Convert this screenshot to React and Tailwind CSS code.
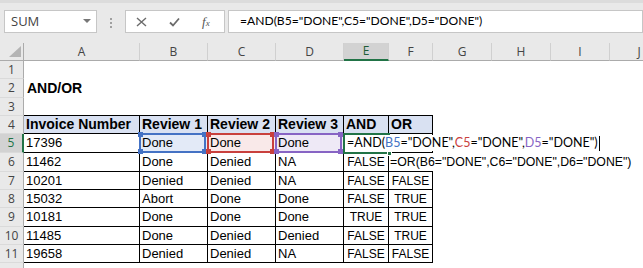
import React from "react";

const COLS = [
  { k: "A", w: "w-[116px]" },
  { k: "B", w: "w-[68px]" },
  { k: "C", w: "w-[68px]" },
  { k: "D", w: "w-[68px]" },
  { k: "E", w: "w-[45px]" },
  { k: "F", w: "w-[44px]" },
  { k: "G", w: "w-[59px]" },
  { k: "H", w: "w-[59px]" },
  { k: "I", w: "w-[59px]" },
  { k: "J", w: "w-[59px]" },
];

const HEIGHTS = [
  "h-[18px]", "h-[19px]", "h-[18px]", "h-[18px]", "h-[19px]", "h-[19px]",
  "h-[18px]", "h-[18px]", "h-[19px]", "h-[18px]", "h-[18px]", "h-[18px]",
];

const DATA = [
  ["11462", "Done", "Denied", "NA", "FALSE", null],
  ["10201", "Denied", "Denied", "NA", "FALSE", "FALSE"],
  ["15032", "Abort", "Done", "Done", "FALSE", "TRUE"],
  ["10181", "Done", "Done", "Done", "TRUE", "TRUE"],
  ["11485", "Done", "Denied", "Denied", "FALSE", "TRUE"],
  ["19658", "Denied", "Denied", "NA", "FALSE", "FALSE"],
];

const cellText = "font-['Liberation_Sans',Arial,sans-serif] text-[13px] text-black";
const boolText = "font-['Liberation_Sans',Arial,sans-serif] text-[12px] text-black";

function RowHead({ n, active }) {
  return (
    <div
      className={
        "w-[24px] shrink-0 flex items-center justify-center text-[12px] font-['Open_Sans',sans-serif] border-b border-[#dadada] " +
        (active
          ? "bg-[#d2d2d2] text-[#217346] border-r-2 border-r-[#217346]"
          : "bg-[#e9e9e9] text-[#444] border-r border-r-[#ababab]")
      }
    >
      {n}
    </div>
  );
}

function Corners({ color }) {
  return (
    <>
      <span className={"absolute -left-[3px] -top-[3px] w-[5px] h-[5px] " + color} />
      <span className={"absolute -right-[3px] -top-[3px] w-[5px] h-[5px] " + color} />
      <span className={"absolute -left-[3px] -bottom-[3px] w-[5px] h-[5px] " + color} />
      <span className={"absolute -right-[3px] -bottom-[3px] w-[5px] h-[5px] " + color} />
    </>
  );
}

function RefCell({ w, fill, border, square, children }) {
  return (
    <div className={"relative shrink-0 h-full flex items-center pl-[2px] border-r border-b border-black " + w + " " + fill + " " + cellText}>
      {children}
      <div className={"absolute -left-px -top-px right-[1px] -bottom-px border-2 z-10 " + border}>
        <Corners color={square} />
      </div>
    </div>
  );
}

function Toolbar() {
  return (
    <div className="h-[43px] bg-[#e9e9e9] border-t-[3px] border-[#dcdcdc] flex items-start pt-[7px]">
      <div className="ml-[4px] w-[93px] h-[23px] bg-white border border-[#c6c6c6] flex items-center justify-between pl-[6px] pr-[5px]">
        <span className="text-[13px] text-[#444] font-['Open_Sans',sans-serif]">SUM</span>
        <svg width="8" height="5" viewBox="0 0 8 5"><path d="M0 0h8L4 4z" fill="#777" /></svg>
      </div>
      <div className="ml-[13px] mt-[8px] flex flex-col gap-[2px]">
        <span className="w-[2px] h-[2px] bg-[#a0a0a0]" />
        <span className="w-[2px] h-[2px] bg-[#a0a0a0]" />
        <span className="w-[2px] h-[2px] bg-[#a0a0a0]" />
      </div>
      <div className="ml-[13px] w-[100px] h-[23px] bg-white border border-[#c6c6c6] flex items-center pl-[10px] gap-[22px]">
        <svg width="11" height="10" viewBox="0 0 11 10">
          <path d="M1 1l9 8M10 1l-9 8" stroke="#6b6b6b" strokeWidth="1.4" fill="none" />
        </svg>
        <svg width="11" height="10" viewBox="0 0 11 10">
          <path d="M1 5.5l3 3L10 1.5" stroke="#6b6b6b" strokeWidth="1.8" fill="none" />
        </svg>
        <span className="text-[13px] italic text-[#555] font-['Liberation_Serif',serif] leading-none">
          f<span className="text-[9px]">x</span>
        </span>
      </div>
      <div className="ml-[3px] flex-1 h-[23px] bg-white border border-[#c6c6c6] flex items-center pl-[11px]">
        <span className="text-[12.1px] text-black font-['Lato',sans-serif] whitespace-nowrap">
          =AND(B5="DONE",C5="DONE",D5="DONE")
        </span>
      </div>
    </div>
  );
}

function ColHeader() {
  return (
    <div className="h-[18px] flex bg-[#e9e9e9]">
      <div className="w-[24px] shrink-0 relative border-r border-b border-[#ababab]">
        <svg className="absolute right-[2px] bottom-[3px]" width="12" height="11" viewBox="0 0 12 11">
          <path d="M12 0V11H0z" fill="#b4b4b4" />
        </svg>
      </div>
      {COLS.map((c) => (
        <div
          key={c.k}
          className={
            "shrink-0 flex items-center justify-center text-[12px] font-['Open_Sans',sans-serif] border-r border-[#d0d0d0] " +
            c.w +
            (c.k === "E"
              ? " bg-[#d2d2d2] text-[#1e5d38] border-b-2 border-b-[#217346]"
              : " text-[#444] border-b border-b-[#ababab]")
          }
        >
          {c.k}
        </div>
      ))}
    </div>
  );
}

function Empty({ w, className = "" }) {
  return <div className={"shrink-0 h-full " + w + " " + className} />;
}

function Plain({ w, children, center, last, bool }) {
  return (
    <div
      className={
        "shrink-0 h-full flex items-center border-b border-black whitespace-nowrap " +
        w +
        (center ? " justify-center" : " pl-[2px]") +
        (last ? "" : " border-r") +
        " " +
        (bool ? boolText : cellText)
      }
    >
      {children}
    </div>
  );
}

export default function App() {
  return (
    <div className="w-[643px] h-[268px] overflow-hidden bg-white select-none">
      <Toolbar />
      <ColHeader />

      {/* rows 1-3 */}
      {[1, 2, 3].map((n) => (
        <div key={n} className={"flex " + HEIGHTS[n - 1]}>
          <RowHead n={n} />
          {COLS.map((c, i) => (
            <div
              key={c.k}
              className={
                "shrink-0 h-full flex items-center " +
                c.w +
                (n === 3 && i < 6 ? " border-b border-black" : "")
              }
            >
              {n === 2 && c.k === "A" && (
                <span className="pl-[3px] font-bold text-[14px] font-['Liberation_Sans',Arial,sans-serif] whitespace-nowrap">
                  AND/OR
                </span>
              )}
            </div>
          ))}
        </div>
      ))}

      {/* row 4 headers */}
      <div className={"flex " + HEIGHTS[3]}>
        <RowHead n={4} />
        {["Invoice Number", "Review 1", "Review 2", "Review 3", "AND", "OR"].map((t, i) => (
          <div
            key={t}
            className={
              "shrink-0 h-full flex items-center pl-[2px] bg-[#d9e1f2] border-r border-b border-black font-bold text-[14px] font-['Liberation_Sans',Arial,sans-serif] whitespace-nowrap " +
              COLS[i].w
            }
          >
            {t}
          </div>
        ))}
      </div>

      {/* row 5 editing */}
      <div className={"flex " + HEIGHTS[4]}>
        <RowHead n={5} active />
        <Plain w={COLS[0].w}>17396</Plain>
        <RefCell w={COLS[1].w} fill="bg-[#e3eaf7]" border="border-[#4472c4]" square="bg-[#4472c4]">Done</RefCell>
        <RefCell w={COLS[2].w} fill="bg-[#f9e9e9]" border="border-[#c9403d]" square="bg-[#c9403d]">Done</RefCell>
        <RefCell w={COLS[3].w} fill="bg-[#eee9f6]" border="border-[#8764c4]" square="bg-[#8764c4]">Done</RefCell>
        <div className={"relative shrink-0 h-full z-20 " + COLS[4].w}>
          <div className="absolute -left-px -top-px -right-px -bottom-px border-t-2 border-l-2 border-b-2 border-[#217346]" />
          <span className="absolute -right-[3px] -bottom-[3px] w-[5px] h-[5px] bg-[#217346] border border-white" />
          <div className="absolute left-[2px] top-[1px] h-[16px] w-[254px] bg-white flex items-center pl-[1px] whitespace-nowrap text-[12.5px] font-['Lato',sans-serif] text-black">
            =AND(<span className="text-[#4472c4]">B5</span>="DONE",<span className="text-[#c9403d]">C5</span>="DONE",<span className="text-[#8764c4]">D5</span>="DONE")
            <span className="ml-[1px] w-px h-[15px] bg-black" />
          </div>
        </div>
        <Plain w={COLS[5].w} />
        <Empty w={COLS[6].w} />
      </div>

      {/* rows 6-11 */}
      {DATA.map((r, idx) => (
        <div key={idx} className={"flex " + HEIGHTS[5 + idx]}>
          <RowHead n={6 + idx} />
          <Plain w={COLS[0].w}>{r[0]}</Plain>
          <Plain w={COLS[1].w}>{r[1]}</Plain>
          <Plain w={COLS[2].w}>{r[2]}</Plain>
          <Plain w={COLS[3].w}>{r[3]}</Plain>
          <Plain w={COLS[4].w} center bool>{r[4]}</Plain>
          {r[5] === null ? (
            <div
              className={
                "shrink-0 h-full flex items-center pl-[1px] border-b border-black whitespace-nowrap overflow-visible relative z-10 text-[12.3px] font-['Liberation_Sans',Arial,sans-serif] " +
                COLS[5].w
              }
            >
              =OR(B6="DONE",C6="DONE",D6="DONE")
            </div>
          ) : (
            <Plain w={COLS[5].w} center bool>{r[5]}</Plain>
          )}
        </div>
      ))}

      <div className={"flex " + HEIGHTS[11]}>
        <RowHead n="" />
      </div>
    </div>
  );
}
